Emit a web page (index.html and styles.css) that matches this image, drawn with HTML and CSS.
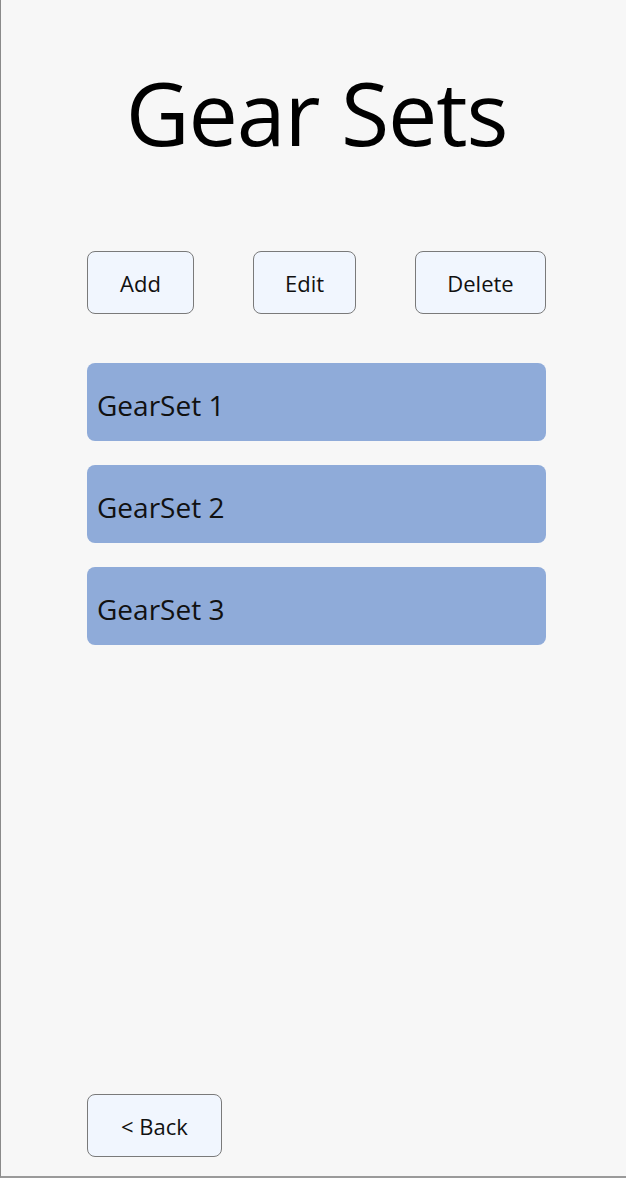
FILE: index.html
```html
<!DOCTYPE html>
<html>
<head>
<meta charset="utf-8">
<link rel="stylesheet" href="styles.css">
<title>Gear Sets</title>
</head>
<body>
<div class="page">
  <h1 class="title">Gear Sets</h1>
  <div class="actions">
    <button class="btn btn-add">Add</button>
    <button class="btn btn-edit">Edit</button>
    <button class="btn btn-delete">Delete</button>
  </div>
  <ul class="list">
    <li class="item">GearSet 1</li>
    <li class="item">GearSet 2</li>
    <li class="item">GearSet 3</li>
  </ul>
  <div class="footer">
    <button class="btn btn-back">&lt; Back</button>
  </div>
</div>
</body>
</html>
```
FILE: styles.css
```css
html, body {
  margin: 0;
  padding: 0;
  background: #f7f7f7;
}
body {
  font-family: "Open Sans", "Noto Sans", sans-serif;
  color: #000;
}
.page {
  box-sizing: border-box;
  width: 626px;
  height: 1178px;
  border-left: 1px solid #8a8a8a;
  border-bottom: 2px solid #9a9a9a;
  display: flex;
  flex-direction: column;
  padding: 0 80px 19px 86px;
}
.title {
  margin: 57px 0 0;
  height: 110px;
  font-size: 88px;
  font-weight: 400;
  line-height: 110px;
  text-align: center;
  letter-spacing: -1.2px;
}
.actions {
  margin-top: 84px;
  display: flex;
  justify-content: space-between;
}
.btn {
  box-sizing: border-box;
  height: 63px;
  background: #f1f6fe;
  border: 1px solid #7a7a7a;
  border-radius: 8px;
  font-family: "Open Sans", "Noto Sans", sans-serif;
  font-size: 22px;
  color: #111;
  padding: 0;
}
.btn-add { width: 107px; }
.btn-edit { width: 103px; }
.btn-delete { width: 131px; }
.btn-back { width: 135px; }
.list {
  list-style: none;
  margin: 49px 0 0;
  padding: 0;
  display: flex;
  flex-direction: column;
  gap: 24px;
}
.item {
  box-sizing: border-box;
  height: 78px;
  background: #8fabd9;
  border-radius: 8px;
  padding-left: 10px;
  padding-top: 6px;
  display: flex;
  align-items: center;
  font-size: 28px;
  color: #111;
}
.footer {
  margin-top: auto;
}
```
